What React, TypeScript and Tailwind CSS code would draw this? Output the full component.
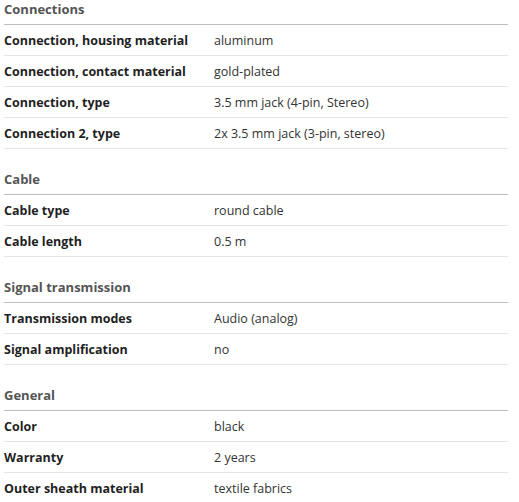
import React from "react";

type Section = { title: string; rows: [string, string][] };

const sections: Section[] = [
  {
    title: "Connections",
    rows: [
      ["Connection, housing material", "aluminum"],
      ["Connection, contact material", "gold-plated"],
      ["Connection, type", "3.5 mm jack (4-pin, Stereo)"],
      ["Connection 2, type", "2x 3.5 mm jack (3-pin, stereo)"],
    ],
  },
  {
    title: "Cable",
    rows: [
      ["Cable type", "round cable"],
      ["Cable length", "0.5 m"],
    ],
  },
  {
    title: "Signal transmission",
    rows: [
      ["Transmission modes", "Audio (analog)"],
      ["Signal amplification", "no"],
    ],
  },
  {
    title: "General",
    rows: [
      ["Color", "black"],
      ["Warranty", "2 years"],
      ["Outer sheath material", "textile fabrics"],
    ],
  },
];

export default function App() {
  return (
    <div
      className="w-[519px] h-[502px] overflow-hidden bg-white pl-[4px]"
      style={{ fontFamily: '"Open Sans", "Noto Sans", sans-serif' }}
    >
      <div className="w-[504px] flex flex-col">
        {sections.map((s, i) => (
          <div key={s.title} className={i === 0 ? "" : "mt-[21px]"}>
            <div className="h-[25px] border-b border-[#bdbdbd] pb-[5px] flex items-end text-[13px] leading-[19px] font-bold text-[#555555]">
              {s.title}
            </div>
            {s.rows.map(([k, v]) => (
              <div
                key={k}
                className="grid grid-cols-[210px_1fr] h-[31px] pt-[2px] items-center border-b border-[#e6e6e6] text-[12.5px] leading-[20px]"
              >
                <div className="font-bold text-[#1f1f1f]">{k}</div>
                <div className="text-[#333333]">{v}</div>
              </div>
            ))}
          </div>
        ))}
      </div>
    </div>
  );
}
